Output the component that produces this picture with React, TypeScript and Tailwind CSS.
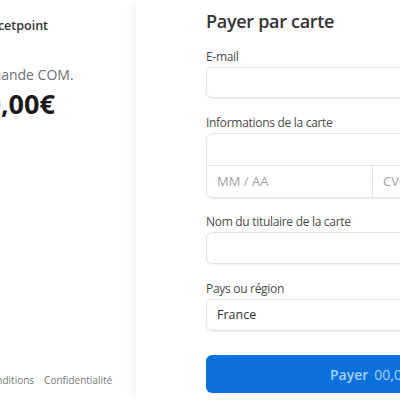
import React from "react";

const Label = ({ children }: { children: React.ReactNode }) => (
  <div className="text-[12px] leading-[16px] tracking-[-0.3px] text-[#4a4a4a] mb-[2px]">{children}</div>
);

const App = () => {
  return (
    <div
      className="w-[400px] h-[400px] overflow-hidden flex bg-white"
      style={{ fontFamily: '"Open Sans", "Noto Sans", sans-serif' }}
    >
      {/* left summary */}
      <div className="w-[136px] shrink-0 flex flex-col bg-white">
        <div className="ml-[-16px] mt-[16px] text-[12.5px] leading-[20px] font-semibold text-[#333] whitespace-nowrap">
          Facetpoint
        </div>
        <div className="ml-[-42px] mt-[29px] text-[14px] leading-[20px] text-[#6d6e78] whitespace-nowrap">
          Commande COM.
        </div>
        <div className="ml-[-30px] mt-[3px] text-[27px] leading-[32px] font-bold text-[#1a1a1a] whitespace-nowrap">
          00,00€
        </div>
        <div className="mt-auto mb-[12px] ml-[-16px] flex gap-[10px] text-[10px] leading-[16px] text-[#777] whitespace-nowrap">
          <span>Conditions</span>
          <span>Confidentialité</span>
        </div>
      </div>

      {/* right payment form */}
      <div className="flex-1 bg-white shadow-[-6px_0_10px_-4px_rgba(0,0,0,0.08)] pl-[70px] pt-[8px] overflow-hidden">
        <div className="w-[380px]">
          <div className="text-[18px] leading-[26px] tracking-[-0.3px] font-semibold text-[#333] mb-[15px]">
            Payer par carte
          </div>

          <Label>E-mail</Label>
          <div className="h-[31px] rounded-[6px] border border-[#e3e3e3] shadow-[0_1px_2px_rgba(0,0,0,0.07)] mb-[17px]" />

          <Label>Informations de la carte</Label>
          <div className="rounded-[6px] border border-[#e3e3e3] shadow-[0_1px_2px_rgba(0,0,0,0.07)] mb-[16px]">
            <div className="h-[32px] border-b border-[#e3e3e3]" />
            <div className="h-[31px] flex">
              <div className="w-[166px] border-r border-[#e3e3e3] flex items-center pl-[10px] text-[13px] text-[#a3a3a3]">
                MM / AA
              </div>
              <div className="flex-1 flex items-center pl-[10px] text-[13px] text-[#a3a3a3]">CVC</div>
            </div>
          </div>

          <Label>Nom du titulaire de la carte</Label>
          <div className="h-[32px] rounded-[6px] border border-[#e3e3e3] shadow-[0_1px_2px_rgba(0,0,0,0.07)] mb-[17px]" />

          <Label>Pays ou région</Label>
          <div className="h-[32px] rounded-[6px] border border-[#e3e3e3] shadow-[0_1px_2px_rgba(0,0,0,0.07)] flex items-center pl-[10px] text-[12.5px] text-[#333] mb-[24px]">
            France
          </div>

          <div className="h-[38px] rounded-[6px] bg-[#0a70dc] flex items-center pl-[124px] gap-[6px] text-[14px] text-[#a9d1ff]">
            <span className="font-semibold">Payer</span>
            <span>00,00 €</span>
          </div>
        </div>
      </div>
    </div>
  );
};

export default App;
